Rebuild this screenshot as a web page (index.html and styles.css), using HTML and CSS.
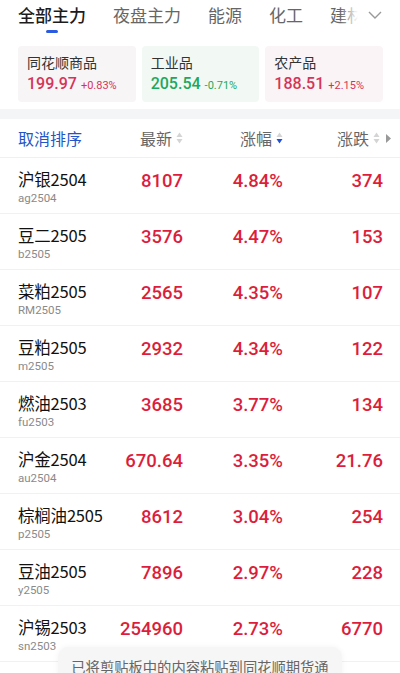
FILE: index.html
```html
<!DOCTYPE html>
<html lang="zh">
<head>
<meta charset="utf-8">
<link rel="stylesheet" href="styles.css">
</head>
<body>
<div class="page">
  <div class="tabs">
    <div class="tab active">全部主力<span class="bar"></span></div>
    <div class="tab">夜盘主力</div>
    <div class="tab">能源</div>
    <div class="tab">化工</div>
    <div class="tab">建材</div>
    <div class="fade"></div>
    <svg class="chev" width="14" height="8" viewBox="0 0 14 8"><path d="M1 1 L7 7 L13 1" fill="none" stroke="#999" stroke-width="1.4"/></svg>
  </div>

  <div class="cards">
    <div class="card c1"><div class="ct">同花顺商品</div><div class="cv red2"><span class="big">199.97</span><span class="sm">+0.83%</span></div></div>
    <div class="card c2"><div class="ct">工业品</div><div class="cv green"><span class="big">205.54</span><span class="sm">-0.71%</span></div></div>
    <div class="card c3"><div class="ct">农产品</div><div class="cv red2"><span class="big">188.51</span><span class="sm">+2.15%</span></div></div>
  </div>

  <div class="band"></div>

  <div class="head">
    <div class="h1">取消排序</div>
    <div class="hc">最新<svg class="sort" width="7" height="12" viewBox="0 0 7 12"><path d="M3.5 0.5 L6.5 5 L0.5 5Z" fill="#d4d4d4"/><path d="M3.5 11.5 L6.5 7 L0.5 7Z" fill="#d4d4d4"/></svg></div>
    <div class="hc">涨幅<svg class="sort" width="7" height="12" viewBox="0 0 7 12"><path d="M3.5 0.5 L6.5 5 L0.5 5Z" fill="#d4d4d4"/><path d="M3.5 11.5 L6.5 7 L0.5 7Z" fill="#2050d8"/></svg></div>
    <div class="hc last">涨跌<svg class="sort" width="7" height="12" viewBox="0 0 7 12"><path d="M3.5 0.5 L6.5 5 L0.5 5Z" fill="#d4d4d4"/><path d="M3.5 11.5 L6.5 7 L0.5 7Z" fill="#d4d4d4"/></svg><svg class="more" width="5" height="9" viewBox="0 0 5 9"><path d="M0 0 L5 4.5 L0 9Z" fill="#999"/></svg></div>
  </div>

  <div class="list">
    <div class="row"><div class="nm"><div class="n">沪银2504</div><div class="code">ag2504</div></div><div class="num">8107</div><div class="num">4.84%</div><div class="num">374</div></div>
    <div class="row"><div class="nm"><div class="n">豆二2505</div><div class="code">b2505</div></div><div class="num">3576</div><div class="num">4.47%</div><div class="num">153</div></div>
    <div class="row"><div class="nm"><div class="n">菜粕2505</div><div class="code">RM2505</div></div><div class="num">2565</div><div class="num">4.35%</div><div class="num">107</div></div>
    <div class="row"><div class="nm"><div class="n">豆粕2505</div><div class="code">m2505</div></div><div class="num">2932</div><div class="num">4.34%</div><div class="num">122</div></div>
    <div class="row"><div class="nm"><div class="n">燃油2503</div><div class="code">fu2503</div></div><div class="num">3685</div><div class="num">3.77%</div><div class="num">134</div></div>
    <div class="row"><div class="nm"><div class="n">沪金2504</div><div class="code">au2504</div></div><div class="num">670.64</div><div class="num">3.35%</div><div class="num">21.76</div></div>
    <div class="row"><div class="nm"><div class="n">棕榈油2505</div><div class="code">p2505</div></div><div class="num">8612</div><div class="num">3.04%</div><div class="num">254</div></div>
    <div class="row"><div class="nm"><div class="n">豆油2505</div><div class="code">y2505</div></div><div class="num">7896</div><div class="num">2.97%</div><div class="num">228</div></div>
    <div class="row"><div class="nm"><div class="n">沪锡2503</div><div class="code">sn2503</div></div><div class="num">254960</div><div class="num">2.73%</div><div class="num">6770</div></div>
  </div>

  <div class="toast">已将剪贴板中的内容粘贴到同花顺期货通</div>
</div>
</body>
</html>
```

FILE: styles.css
```css
html, body {
  margin: 0;
  padding: 0;
  background: #fff;
}
body {
  font-family: "Noto Sans CJK SC", "Noto Sans", sans-serif;
  color: #222;
}
.page {
  position: relative;
  width: 400px;
  height: 673px;
  overflow: hidden;
}
.tabs {
  position: relative;
  display: flex;
  align-items: center;
  height: 30px;
  padding: 0 0 0 18px;
  gap: 27px;
  font-size: 17px;
  color: #666;
  white-space: nowrap;
  margin-bottom: 16px;
}
.tab {
  position: relative;
  line-height: 30px;
}
.tab.active {
  color: #1c1c1c;
  font-weight: 500;
}
.tab.active .bar {
  position: absolute;
  left: 28px;
  top: 30px;
  width: 12px;
  height: 3px;
  border-radius: 2px;
  background: #2b5be0;
}
.fade {
  position: absolute;
  left: 340px;
  top: 0;
  width: 60px;
  height: 32px;
  background: linear-gradient(to right, rgba(255,255,255,0), #fff 30%, #fff);
}
.chev {
  position: absolute;
  left: 368px;
  top: 11px;
}
.cards {
  display: flex;
  gap: 6px;
  padding: 0 17px 0 18px;
}
.card {
  flex: 1;
  height: 56px;
  border-radius: 4px;
  padding: 6px 0 0 9px;
  box-sizing: border-box;
}
.c1 { background: #f7f5f6; }
.c2 { background: #f2f9f5; }
.c3 { background: #faf4f6; }
.ct {
  font-size: 14px;
  color: #333;
  line-height: 20px;
}
.cv {
  display: flex;
  align-items: baseline;
  gap: 4px;
  line-height: 24px;
  font-family: Roboto, sans-serif;
}
.big { font-size: 16px; font-weight: 500; }
.sm { font-size: 11px; }
.red2 { color: #d53458; }
.green { color: #1ea85b; }
.band {
  height: 10px;
  margin-top: 7px;
  background: #f4f5f7;
}
.head {
  display: grid;
  grid-template-columns: 82px 83px 100px 100px;
  align-items: center;
  height: 38px;
  padding: 0 17px 0 18px;
  border-bottom: 1px solid #f0f0f0;
  font-size: 16px;
  color: #666;
}
.h1 { color: #2355c8; }
.hc {
  display: flex;
  align-items: center;
  justify-content: flex-end;
  gap: 4px;
}
.hc.last { margin-right: -8px; }
.more { margin-left: 2px; }
.row {
  display: grid;
  grid-template-columns: 82px 83px 100px 100px;
  align-items: center;
  height: 55px;
  padding: 0 17px 0 18px;
  border-bottom: 1px solid #f1f1f1;
}
.nm {
  white-space: nowrap;
  margin-top: 3px;
}
.n {
  font-size: 16.5px;
  line-height: 21px;
  color: #111;
  letter-spacing: -0.2px;
}
.code {
  font-size: 11.5px;
  line-height: 16px;
  color: #8a8a8a;
  font-family: Roboto, sans-serif;
}
.num {
  text-align: right;
  font-family: Roboto, sans-serif;
  font-weight: 500;
  font-size: 18.5px;
  color: #dc1e3c;
  margin-top: -9px;
}
.toast {
  position: absolute;
  left: 58px;
  top: 647px;
  width: 284px;
  height: 60px;
  border-radius: 10px;
  background: #f6f6f6;
  box-shadow: 0 0 6px rgba(0,0,0,0.05);
  text-align: center;
  font-size: 14.3px;
  color: #666;
  line-height: 18px;
  padding-top: 11px;
  box-sizing: border-box;
}
```
